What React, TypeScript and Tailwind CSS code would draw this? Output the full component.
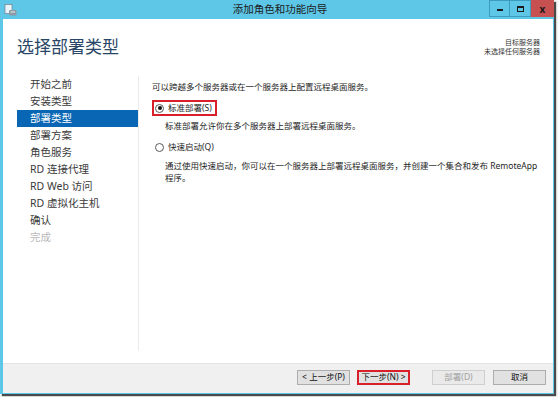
const steps = [
  { label: "开始之前" },
  { label: "安装类型" },
  { label: "部署类型", active: true },
  { label: "部署方案" },
  { label: "角色服务" },
  { label: "RD 连接代理" },
  { label: "RD Web 访问" },
  { label: "RD 虚拟化主机" },
  { label: "确认" },
  { label: "完成", disabled: true },
];

function Radio({ checked }: { checked?: boolean }) {
  return (
    <span className="w-[9px] h-[9px] rounded-full border border-[#5a5a5a] bg-white flex items-center justify-center shrink-0">
      {checked && <span className="w-[4px] h-[4px] rounded-full bg-[#111]" />}
    </span>
  );
}

function WinButton({ children, disabled, highlight }: { children: React.ReactNode; disabled?: boolean; highlight?: boolean }) {
  return (
    <button
      className={`w-[53px] h-[15px] flex items-center justify-center text-[8.5px] leading-none bg-[#e1e1e1] ${
        highlight ? "border-2 border-[#d9202a]" : "border border-[#adadad]"
      } ${disabled ? "text-[#a0a0a0] bg-[#eaeaea] border-[#cfcfcf]" : "text-[#111]"}`}
    >
      {children}
    </button>
  );
}

export default function App() {
  return (
    <div className="w-[558px] h-[397px] bg-[#f4f4f4] overflow-hidden font-['Noto_Sans','Noto_Sans_CJK_SC',sans-serif]">
      <div className="w-[554px] h-[394px] flex flex-col bg-[#5ec6e6] shadow-[2px_2px_1px_#4a4a4a]">
        {/* Title bar */}
        <div className="h-[19px] grid grid-cols-[1fr_auto_1fr] items-center">
          <div className="pl-[4px] flex items-center">
            <svg width="13" height="12" viewBox="0 0 13 12">
              <rect x="1" y="0.5" width="7" height="9" fill="#eaf6fb" stroke="#7a8a94" strokeWidth="0.8" />
              <rect x="5" y="6" width="7.5" height="5.5" rx="1" fill="#8d9aa3" />
              <rect x="6.5" y="7.5" width="4.5" height="1" fill="#e8eef2" />
            </svg>
          </div>
          <div className="text-[10.5px] text-[#1b1b1b] pl-[6px]">添加角色和功能向导</div>
          <div className="flex justify-end self-start h-[17px]">
            <div className="w-[21px] h-[17px] border border-[#3d9cbd] flex items-end justify-center pb-[5px]">
              <span className="w-[6px] h-[2px] bg-[#1a1a1a]" />
            </div>
            <div className="w-[21px] h-[17px] border border-[#3d9cbd] border-l-0 flex items-center justify-center">
              <span className="w-[7px] h-[6px] border border-[#1a1a1a] border-t-2" />
            </div>
            <div className="w-[23px] h-[17px] bg-[#c75050] flex items-center justify-center text-[#1a1a1a] text-[10px] font-bold leading-none">
              x
            </div>
          </div>
        </div>

        {/* Body */}
        <div className="flex-1 flex flex-col bg-white ml-[3px] mr-[1px] mb-[1px]">
          {/* Header */}
          <div className="h-[57px] flex justify-between items-start pt-[18px] pl-[14px] pr-[13px]">
            <h1 className="text-[17px] leading-[20px] text-[#2a4666]">选择部署类型</h1>
            <div className="text-right text-[7px] leading-[9px] text-[#333] pt-[1px]">
              <div>目标服务器</div>
              <div>未选择任何服务器</div>
            </div>
          </div>

          {/* Main */}
          <div className="flex-1 flex pb-[12px]">
            <div className="w-[136px] border-r border-[#ebebeb] pl-[14px]">
              {steps.map((s) => (
                <div
                  key={s.label}
                  className={`h-[17px] leading-[17px] pl-[13px] text-[10.5px] ${
                    s.active ? "bg-[#0866b4] text-white" : s.disabled ? "text-[#b8b8b8]" : "text-[#3a3a3a]"
                  }`}
                >
                  {s.label}
                </div>
              ))}
            </div>

            <div className="flex-1 pl-[13px] pt-[5px] text-[8.5px] text-[#1e1e1e]">
              <p className="leading-[12px]">可以跨越多个服务器或在一个服务器上配置远程桌面服务。</p>

              <div className="mt-[7px] inline-flex items-center gap-[4px] h-[16px] border-2 border-[#d9202a] pl-[1px] pr-[3px]">
                <Radio checked />
                <span>标准部署(S)</span>
              </div>
              <p className="mt-[4px] ml-[13px] leading-[12px]">标准部署允许你在多个服务器上部署远程桌面服务。</p>

              <div className="mt-[7px] flex items-center gap-[4px] h-[16px] border-2 border-transparent pl-[1px]">
                <Radio />
                <span>快速启动(Q)</span>
              </div>
              <p className="mt-[5px] ml-[13px] leading-[12px] whitespace-nowrap">
                通过使用快速启动，你可以在一个服务器上部署远程桌面服务，并创建一个集合和发布 RemoteApp
                <br />
                程序。
              </p>
            </div>
          </div>

          {/* Footer */}
          <div className="h-[30px] bg-[#f0f0f0] border-t border-[#e3e3e3] flex items-center justify-end pr-[7px] pb-[2px]">
            <div className="flex items-center">
              <WinButton>&lt; 上一步(P)</WinButton>
              <div className="ml-[7px]">
                <WinButton highlight>下一步(N) &gt;</WinButton>
              </div>
              <div className="ml-[22px]">
                <WinButton disabled>部署(D)</WinButton>
              </div>
              <div className="ml-[8px]">
                <WinButton>取消</WinButton>
              </div>
            </div>
          </div>
        </div>
      </div>
    </div>
  );
}
